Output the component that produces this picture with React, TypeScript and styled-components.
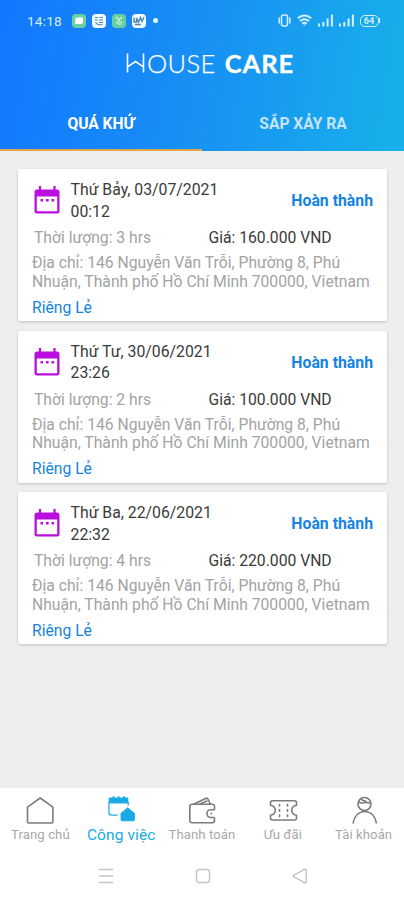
import React from "react";
import styled, { createGlobalStyle } from "styled-components";

const GlobalStyle = createGlobalStyle`
  * { box-sizing: border-box; }
  body { margin: 0; background: #eee; font-family: Roboto, "Noto Sans", sans-serif; }
  svg { display: block; flex: none; }
`;

const Screen = styled.div`
  width: 404px;
  height: 900px;
  display: flex;
  flex-direction: column;
  overflow: hidden;
  background: #eee;
`;

const Header = styled.header`
  height: 151px;
  display: flex;
  flex-direction: column;
  color: #fff;
  background: linear-gradient(100deg, #1378ff 2%, #178bf6 40%, #18aeea 96%);
`;

const StatusBar = styled.div`
  height: 41px;
  padding: 0 24px 0 27px;
  display: flex;
  align-items: center;
  justify-content: space-between;
`;

const StatusGroup = styled.div<{ $gap: number }>`
  display: flex;
  align-items: center;
  gap: ${(p) => p.$gap}px;
  color: #d6f0ff;
`;

const Clock = styled.span`
  width: 37px;
  margin-right: 2px;
  font-size: 13.6px;
  letter-spacing: 0.2px;
  white-space: nowrap;
`;

const AppBadge = styled.span<{ $bg: string; $fg: string }>`
  width: 14px;
  height: 14px;
  border-radius: 4px;
  display: flex;
  align-items: center;
  justify-content: center;
  background: ${(p) => p.$bg};
  color: ${(p) => p.$fg};
`;

const Dot = styled.span`
  width: 5px;
  height: 5px;
  margin-left: 1px;
  border-radius: 50%;
  background: #e8f6ff;
`;

const Brand = styled.div`
  height: 44px;
  padding-left: 126px;
  display: flex;
  align-items: center;
`;

const BrandWord = styled.span<{ $bold?: boolean }>`
  font-family: Lato, sans-serif;
  font-size: 25.5px;
  line-height: 44px;
  font-weight: ${(p) => (p.$bold ? 700 : 300)};
  letter-spacing: ${(p) => (p.$bold ? 0.9 : 0.4)}px;
  margin-left: ${(p) => (p.$bold ? 9 : 2)}px;
  -webkit-text-stroke: ${(p) => (p.$bold ? "0.3px #fff" : "0.25px #fff")};
`;

const Tabs = styled.div`
  flex: 1;
  display: grid;
  grid-template-columns: 1fr 1fr;
`;

const Tab = styled.div<{ $active?: boolean }>`
  height: 66px;
  padding-top: 14px;
  line-height: 51px;
  text-align: center;
  font-size: 15.6px;
  font-weight: 700;
  color: ${(p) => (p.$active ? "#fff" : "#c6e4fb")};
  border-bottom: 2px solid ${(p) => (p.$active ? "#e0a548" : "transparent")};
`;

const List = styled.main`
  flex: 1;
  padding: 18px 17px 0 18px;
  display: flex;
  flex-direction: column;
  gap: 9.5px;
`;

const Card = styled.article`
  height: 152px;
  padding: 10.5px 14px 0;
  display: flex;
  flex-direction: column;
  border-radius: 2px;
  background: #fff;
  box-shadow: 0 1px 3px rgba(0, 0, 0, 0.2);
`;

const CardHead = styled.div`
  height: 42.5px;
  display: flex;
  align-items: center;
`;

const When = styled.div`
  flex: 1;
  margin-left: 7.5px;
  font-size: 15.8px;
  line-height: 21.5px;
  color: #3a3a3a;
`;

const DateLine = styled.div`
  white-space: nowrap;
`;

const Status = styled.div`
  font-size: 15.8px;
  font-weight: 700;
  color: #1583e4;
`;

const Facts = styled.div`
  height: 31px;
  display: grid;
  grid-template-columns: 174.5px 1fr;
  align-items: center;
  padding-left: 2px;
  font-size: 15.7px;
`;

const Fact = styled.span<{ $strong?: boolean }>`
  color: ${(p) => (p.$strong ? "#3a3a3a" : "#a3a3a3")};
  white-space: nowrap;
`;

const Address = styled.div`
  margin-top: 1px;
  font-size: 15.7px;
  line-height: 18.7px;
  color: #a3a3a3;
`;

const AddressLine = styled.div`
  white-space: nowrap;
`;

const Kind = styled.div`
  margin-top: 6.5px;
  font-size: 15.7px;
  line-height: 20px;
  color: #1583d8;
`;

const Nav = styled.nav`
  height: 63px;
  padding-top: 6px;
  display: grid;
  grid-template-columns: repeat(5, 1fr);
  background: #fff;
`;

const NavItem = styled.div<{ $active?: boolean }>`
  display: flex;
  flex-direction: column;
  align-items: center;
  color: ${(p) => (p.$active ? "#19a9e5" : "#7c7c7c")};
`;

const NavLabel = styled.span<{ $active?: boolean }>`
  line-height: 18px;
  white-space: nowrap;
  letter-spacing: 0.1px;
  font-size: ${(p) => (p.$active ? 15.5 : 13.1)}px;
  color: ${(p) => (p.$active ? "#19a9e5" : "#a8a8a8")};
`;

const SystemBar = styled.div`
  height: 49px;
  padding: 0 56px 0 58px;
  display: grid;
  grid-template-columns: repeat(3, 1fr);
  align-items: center;
  justify-items: center;
  background: #fff;
  color: #c4c4c4;
`;

const Calendar = () => (
  <svg width="31" height="31" viewBox="0 0 31 31">
    <path d="M5 4.500h20a2.500 2.500 0 0 1 2.500 2.500v19a2.500 2.500 0 0 1-2.500 2.500H5a2.500 2.500 0 0 1-2.500-2.500V7A2.500 2.500 0 0 1 5 4.500zM4.800 11.500v14.700h20.400V11.500z" fill="#ba0de0" fillRule="evenodd" />
    <path d="M8 1v5M22.500 1v5" stroke="#ba0de0" strokeWidth="2.200" />
    <path d="M8.500 14h2.600v2.600H8.500zM14 14h2.600v2.600H14zM19.500 14h2.600v2.600h-2.600z" fill="#ba0de0" />
  </svg>
);

const BrandH = () => (
  <svg width="19" height="20" viewBox="0 0 19 20" fill="none" stroke="#fff" strokeWidth="1.600">
    <path d="M1.500 .5v19M17.500 .5v19M1.500 13.800l8-5.300 8 5.300" />
  </svg>
);

const Vibrate = () => (
  <svg width="13" height="13" viewBox="0 0 13 13" fill="none" stroke="currentColor">
    <rect x="3.500" y="1" width="6" height="11" rx="2" strokeWidth="1.600" />
    <path d="M1.200 3.500v6M11.800 3.500v6" strokeWidth="1.500" />
  </svg>
);

const Wifi = () => (
  <svg width="15" height="13" viewBox="0 0 15 13" fill="none" stroke="currentColor" strokeWidth="2">
    <path d="M.8 4.200q6.700-5.500 13.400 0M3 7q4.500-3.500 9 0M5.200 9.500q2.300-1.700 4.600 0" />
    <path d="M6.200 10.500h2.600L7.500 12z" fill="currentColor" stroke="none" />
  </svg>
);

const Signal = () => (
  <svg width="15" height="13" viewBox="0 0 15 13" stroke="currentColor" strokeWidth="2">
    <path d="M1 12.500v-3M5.300 12.500V8M9.600 12.500V4.500M13.900 12.500V.5" />
  </svg>
);

const BatteryShell = styled.span`
  width: 19px;
  height: 12px;
  border: 1.5px solid currentColor;
  border-radius: 5px;
  font-size: 9px;
  line-height: 10px;
  font-weight: 700;
  text-align: center;
`;

const BatteryWrap = styled.span`
  display: flex;
  align-items: center;
  &::after {
    content: "";
    width: 1.5px;
    height: 5px;
    background: currentColor;
  }
`;

const Leaf = () => (
  <svg width="10" height="10" viewBox="0 0 10 10" fill="currentColor">
    <path d="M3.500 1.500H9v4q0 2.500-2.500 2.500H1.200V4q0-2.500 2.300-2.500z" />
  </svg>
);

const Lines = () => (
  <svg width="10" height="10" viewBox="0 0 10 10" fill="none" stroke="currentColor" strokeWidth="1.200">
    <path d="M1 1.500h3M5.500 1.500H9M1 4h2.500M5 4h4M1.500 6.500q2 3 7 2M5 6.500h4" />
  </svg>
);

const Branch = () => (
  <svg width="10" height="10" viewBox="0 0 10 10" fill="none" stroke="currentColor" strokeWidth="1.200">
    <path d="M2 1l3 3 3-3M5 4v5M3 5v3M7 5v4" />
  </svg>
);

const Wave = () => (
  <svg width="12" height="10" viewBox="0 0 12 10" fill="none" stroke="currentColor" strokeWidth="1.400">
    <path d="M1 1.500v4.500h2.500V2l2 4 2-4.500 1.500 4 2-4.500M2 8.500h6" />
  </svg>
);

const line = { width: 32, height: 32, viewBox: "0 0 32 32", fill: "none", stroke: "currentColor", strokeWidth: 1.6 } as const;

const HomeIcon = () => (
  <svg {...line}><path d="M3.500 13.200L16.200 4l12.700 9.200v14.600q0 1.200-1.200 1.200H4.700q-1.200 0-1.200-1.200z" strokeLinejoin="round" /></svg>
);

const JobsIcon = () => (
  <svg {...line}>
    <path d="M4.300 4h18.400v4.800H4.300z" fill="currentColor" strokeWidth="1.200" strokeLinejoin="round" />
    <path d="M8.500 2.300v2M13.700 2.300v2M19 2.300v2" strokeWidth="1.800" />
    <path d="M3.900 8v10.500q0 2.700 2.700 2.700h5.900M23.200 8v3.500" strokeWidth="1.200" />
    <path d="M16 19.300l6.700-5.500 6.700 5.500v6.500q0 1-1 1H17q-1 0-1-1z" fill="currentColor" strokeWidth=".9" strokeLinejoin="round" />
  </svg>
);

const WalletIcon = () => (
  <svg {...line} strokeLinejoin="round">
    <path d="M28.500 16V12.500Q28.500 10.300 26.300 10.300H6q-2.200 0-2.200 2.200v14q0 2.200 2.200 2.200h20.300q2.200 0 2.200-2.200V23.500" />
    <path d="M7.500 10.300l12.800-6q1.100-.5 1.600.7l2.600 5.300M13.500 10.300l7.800-3.500" />
    <path d="M28.500 15.700h-3.700a3.900 3.900 0 0 0 0 7.800h3.700M24.500 19.600h1.500" />
  </svg>
);

const TicketIcon = () => (
  <svg {...line} strokeLinejoin="round">
    <path d="M5.500 6.800h22q2 0 2 2v2.500q-4.800 1-4.800 5t4.800 5V24q0 2-2 2h-22q-2 0-2-2v-2.700q4.800-1 4.800-5t-4.800-5V8.800q0-2 2-2z" />
    <path d="M12.500 9.800v13.500M20.500 9.800v13.500" strokeDasharray="3 2.200" strokeWidth="1.500" />
  </svg>
);

const UserIcon = () => (
  <svg {...line}>
    <circle cx="16.500" cy="10" r="6.500" />
    <path d="M10.500 7.800q2.200 1.800 5.200 1 3.500-1.200 6.800.7M13 4.800q1 2.300 5 2.300M5 29.500c1.200-7.200 5.500-12 11.700-12s10.600 4.800 11.800 12" />
  </svg>
);

const Recents = () => (
  <svg width="16" height="16" viewBox="0 0 16 16" stroke="currentColor" strokeWidth="1.500">
    <path d="M1 1.500h14M1 8h14M1 14.500h14" />
  </svg>
);

const HomeKey = () => (
  <svg width="16" height="16" viewBox="0 0 16 16" fill="none" stroke="currentColor" strokeWidth="1.400">
    <rect x="1.500" y="1.500" width="13" height="13" rx="2.500" />
  </svg>
);

const BackKey = () => (
  <svg width="16" height="16" viewBox="0 0 16 16" fill="none" stroke="currentColor" strokeWidth="1.400" strokeLinejoin="round">
    <path d="M1.500 7.300q-.8.700 0 1.400L12.500 14.600q1.700.7 1.700-.9V2.300q0-1.600-1.700-.9z" />
  </svg>
);

const jobs = [
  { date: "Thứ Bảy, 03/07/2021", time: "00:12", hours: 3, price: "160.000" },
  { date: "Thứ Tư, 30/06/2021", time: "23:26", hours: 2, price: "100.000" },
  { date: "Thứ Ba, 22/06/2021", time: "22:32", hours: 4, price: "220.000" },
];

const navItems = [
  { label: "Trang chủ", Icon: HomeIcon },
  { label: "Công việc", Icon: JobsIcon, active: true },
  { label: "Thanh toán", Icon: WalletIcon },
  { label: "Ưu đãi", Icon: TicketIcon },
  { label: "Tài khoản", Icon: UserIcon },
];

export default function App() {
  return (
    <>
      <GlobalStyle />
      <Screen>
        <Header>
          <StatusBar>
            <StatusGroup $gap={6}>
              <Clock>14:18</Clock>
              <AppBadge $bg="#69d2a0" $fg="#fff"><Leaf /></AppBadge>
              <AppBadge $bg="#f1faff" $fg="#5187b8"><Lines /></AppBadge>
              <AppBadge $bg="#69cda0" $fg="#c9f5da"><Branch /></AppBadge>
              <AppBadge $bg="#f1faff" $fg="#5187b8"><Wave /></AppBadge>
              <Dot />
            </StatusGroup>
            <StatusGroup $gap={6}>
              <Vibrate />
              <Wifi />
              <Signal />
              <Signal />
              <BatteryWrap><BatteryShell>64</BatteryShell></BatteryWrap>
            </StatusGroup>
          </StatusBar>
          <Brand>
            <BrandH />
            <BrandWord>OUSE</BrandWord>
            <BrandWord $bold>CARE</BrandWord>
          </Brand>
          <Tabs>
            <Tab $active>QUÁ KHỨ</Tab>
            <Tab>SẮP XẢY RA</Tab>
          </Tabs>
        </Header>
        <List>
          {jobs.map((job) => (
            <Card key={job.date}>
              <CardHead>
                <Calendar />
                <When>
                  <DateLine>{job.date}</DateLine>
                  <DateLine>{job.time}</DateLine>
                </When>
                <Status>Hoàn thành</Status>
              </CardHead>
              <Facts>
                <Fact>Thời lượng: {job.hours} hrs</Fact>
                <Fact $strong>Giá: {job.price} VND</Fact>
              </Facts>
              <Address>
                <AddressLine>Địa chỉ: 146 Nguyễn Văn Trỗi, Phường 8, Phú</AddressLine>
                <AddressLine>Nhuận, Thành phố Hồ Chí Minh 700000, Vietnam</AddressLine>
              </Address>
              <Kind>Riêng Lẻ</Kind>
            </Card>
          ))}
        </List>
        <Nav>
          {navItems.map(({ label, Icon, active }) => (
            <NavItem key={label} $active={active}>
              <Icon />
              <NavLabel $active={active}>{label}</NavLabel>
            </NavItem>
          ))}
        </Nav>
        <SystemBar>
          <Recents />
          <HomeKey />
          <BackKey />
        </SystemBar>
      </Screen>
    </>
  );
}
